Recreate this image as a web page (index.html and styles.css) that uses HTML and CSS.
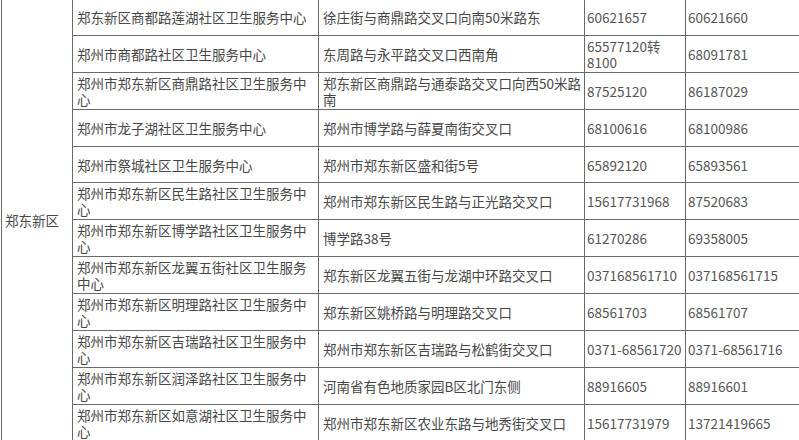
FILE: index.html
```html
<!DOCTYPE html>
<html lang="zh-CN">
<head>
<meta charset="utf-8">
<title>郑东新区社区卫生服务中心</title>
<link rel="stylesheet" href="styles.css">
</head>
<body>
<table class="sheet">
  <colgroup>
    <col class="c-area">
    <col class="c-name">
    <col class="c-addr">
    <col class="c-tel">
    <col class="c-fax">
  </colgroup>
  <tbody>
    <tr>
      <td class="area" rowspan="12">郑东新区</td>
      <td>郑东新区商都路莲湖社区卫生服务中心</td>
      <td>徐庄街与商鼎路交叉口向南50米路东</td>
      <td class="num">60621657</td>
      <td class="num">60621660</td>
    </tr>
    <tr>
      <td>郑州市商都路社区卫生服务中心</td>
      <td>东周路与永平路交叉口西南角</td>
      <td class="num">65577120转8100</td>
      <td class="num">68091781</td>
    </tr>
    <tr>
      <td>郑州市郑东新区商鼎路社区卫生服务中心</td>
      <td>郑东新区商鼎路与通泰路交叉口向西50米路南</td>
      <td class="num">87525120</td>
      <td class="num">86187029</td>
    </tr>
    <tr>
      <td>郑州市龙子湖社区卫生服务中心</td>
      <td>郑州市博学路与薛夏南街交叉口</td>
      <td class="num">68100616</td>
      <td class="num">68100986</td>
    </tr>
    <tr>
      <td>郑州市祭城社区卫生服务中心</td>
      <td>郑州市郑东新区盛和街5号</td>
      <td class="num">65892120</td>
      <td class="num">65893561</td>
    </tr>
    <tr>
      <td>郑州市郑东新区民生路社区卫生服务中心</td>
      <td>郑州市郑东新区民生路与正光路交叉口</td>
      <td class="num">15617731968</td>
      <td class="num">87520683</td>
    </tr>
    <tr>
      <td>郑州市郑东新区博学路社区卫生服务中心</td>
      <td>博学路38号</td>
      <td class="num">61270286</td>
      <td class="num">69358005</td>
    </tr>
    <tr>
      <td>郑州市郑东新区龙翼五街社区卫生服务中心</td>
      <td>郑东新区龙翼五街与龙湖中环路交叉口</td>
      <td class="num">037168561710</td>
      <td class="num">037168561715</td>
    </tr>
    <tr>
      <td>郑州市郑东新区明理路社区卫生服务中心</td>
      <td>郑东新区姚桥路与明理路交叉口</td>
      <td class="num">68561703</td>
      <td class="num">68561707</td>
    </tr>
    <tr>
      <td>郑州市郑东新区吉瑞路社区卫生服务中心</td>
      <td>郑州市郑东新区吉瑞路与松鹤街交叉口</td>
      <td class="num">0371-68561720</td>
      <td class="num">0371-68561716</td>
    </tr>
    <tr>
      <td>郑州市郑东新区润泽路社区卫生服务中心</td>
      <td>河南省有色地质家园B区北门东侧</td>
      <td class="num">88916605</td>
      <td class="num">88916601</td>
    </tr>
    <tr>
      <td>郑州市郑东新区如意湖社区卫生服务中心</td>
      <td>郑州市郑东新区农业东路与地秀街交叉口</td>
      <td class="num">15617731979</td>
      <td class="num">13721419665</td>
    </tr>
  </tbody>
</table>
</body>
</html>
```

FILE: styles.css
```css
html, body {
  margin: 0;
  padding: 0;
  background: #ffffff;
  overflow: hidden;
}

.sheet {
  border-collapse: collapse;
  table-layout: fixed;
  width: 930px;
  margin: -2px 0 0 1px;
  font-family: "Noto Sans CJK SC", "Noto Sans", sans-serif;
  font-size: 13.5px;
  font-weight: 400;
  line-height: 16px;
  color: #474747;
}

.c-area { width: 71px; }
.c-name { width: 246px; }
.c-addr { width: 266px; }
.c-tel  { width: 101px; }
.c-fax  { width: 246px; }

.sheet td {
  border: 1px solid #6a6a6a;
  height: 36.9px;
  padding: 1px 2px 1px 4px;
  box-sizing: border-box;
  vertical-align: middle;
  text-align: left;
}

.sheet td.num {
  padding-left: 2px;
  color: #555555;
}

.sheet td.area {
  padding-left: 3px;
}
```
